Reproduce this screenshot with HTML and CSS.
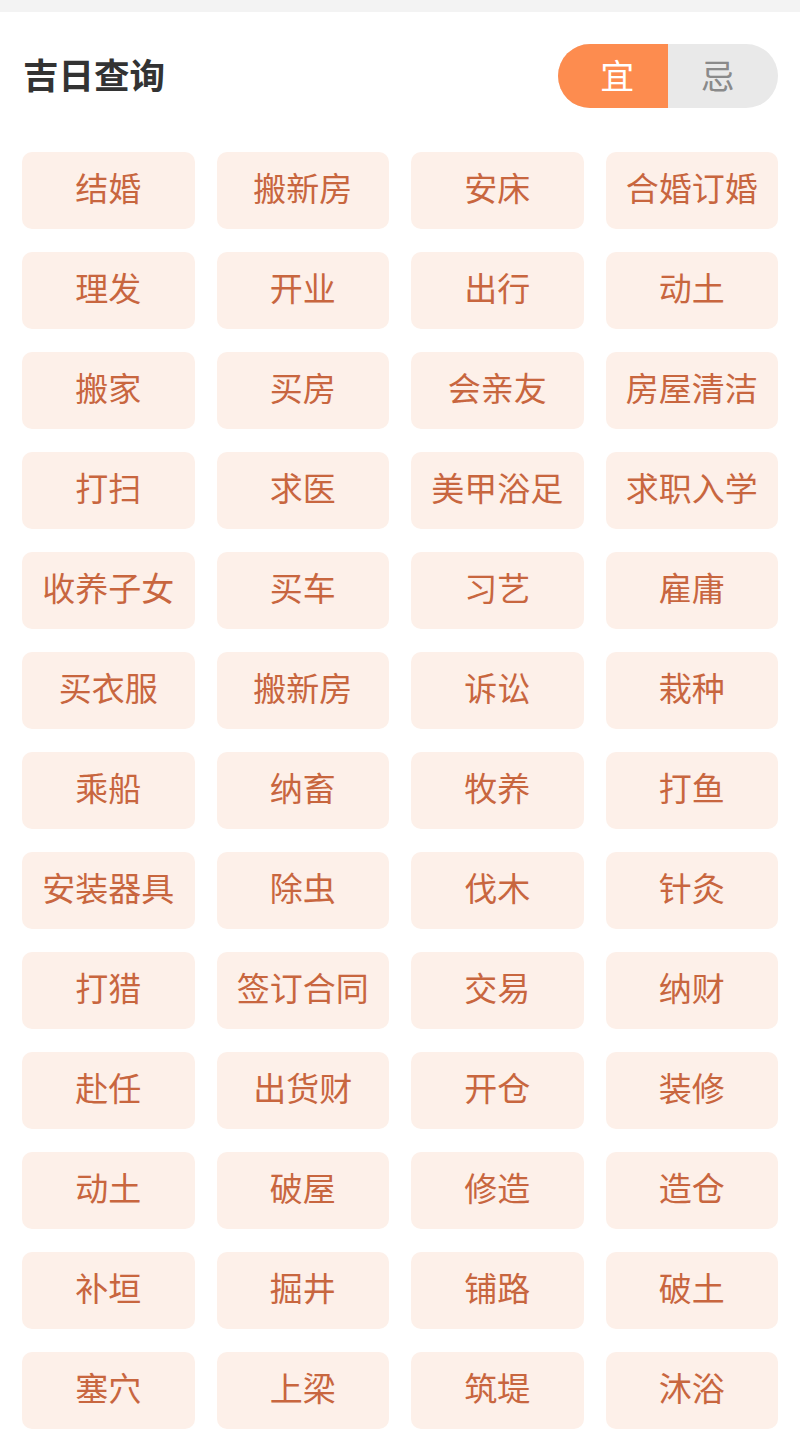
FILE: index.html
```html
<!DOCTYPE html>
<html lang="zh-CN">
<head>
    <meta charset="UTF-8">
    <meta name="viewport" content="width=device-width, initial-scale=1.0">
    <title>吉日查询</title>
    <link rel="stylesheet" href="styles.css">
</head>
<body>

<div class="top-strip"></div>

<div class="page">
    <!-- Header -->
    <div class="header">
        <h1 class="title">吉日查询</h1>
        <div class="toggle">
            <span class="toggle-item active">宜</span>
            <span class="toggle-item">忌</span>
        </div>
    </div>

    <!-- Tags -->
    <div class="tag-grid">
        <div class="tag">结婚</div>
        <div class="tag">搬新房</div>
        <div class="tag">安床</div>
        <div class="tag">合婚订婚</div>
        <div class="tag">理发</div>
        <div class="tag">开业</div>
        <div class="tag">出行</div>
        <div class="tag">动土</div>
        <div class="tag">搬家</div>
        <div class="tag">买房</div>
        <div class="tag">会亲友</div>
        <div class="tag">房屋清洁</div>
        <div class="tag">打扫</div>
        <div class="tag">求医</div>
        <div class="tag">美甲浴足</div>
        <div class="tag">求职入学</div>
        <div class="tag">收养子女</div>
        <div class="tag">买车</div>
        <div class="tag">习艺</div>
        <div class="tag">雇庸</div>
        <div class="tag">买衣服</div>
        <div class="tag">搬新房</div>
        <div class="tag">诉讼</div>
        <div class="tag">栽种</div>
        <div class="tag">乘船</div>
        <div class="tag">纳畜</div>
        <div class="tag">牧养</div>
        <div class="tag">打鱼</div>
        <div class="tag">安装器具</div>
        <div class="tag">除虫</div>
        <div class="tag">伐木</div>
        <div class="tag">针灸</div>
        <div class="tag">打猎</div>
        <div class="tag">签订合同</div>
        <div class="tag">交易</div>
        <div class="tag">纳财</div>
        <div class="tag">赴任</div>
        <div class="tag">出货财</div>
        <div class="tag">开仓</div>
        <div class="tag">装修</div>
        <div class="tag">动土</div>
        <div class="tag">破屋</div>
        <div class="tag">修造</div>
        <div class="tag">造仓</div>
        <div class="tag">补垣</div>
        <div class="tag">掘井</div>
        <div class="tag">铺路</div>
        <div class="tag">破土</div>
        <div class="tag">塞穴</div>
        <div class="tag">上梁</div>
        <div class="tag">筑堤</div>
        <div class="tag">沐浴</div>
    </div>
</div>

</body>
</html>
```

FILE: styles.css
```css
body {
    font-family: "Noto Sans CJK SC", "Noto Sans", sans-serif;
    background-color: #ffffff;
    margin: 0;
    padding: 0;
    overflow: hidden;
}
.top-strip {
    height: 12px;
    background-color: #f3f3f3;
}
.page {
    padding: 0 22px;
}
.header {
    display: flex;
    justify-content: space-between;
    align-items: center;
    height: 128px;
    padding-left: 1px;
}
.title {
    margin: 0 0 6px 0;
    font-size: 35.5px;
    font-weight: bold;
    color: #333333;
}
.toggle {
    display: flex;
    width: 220px;
    height: 64px;
    border-radius: 32px;
    overflow: hidden;
    background-color: #e9e9e9;
}
.toggle-item {
    flex: 1;
    display: flex;
    justify-content: center;
    align-items: center;
    padding-bottom: 4px;
    font-size: 34px;
    color: #8a8a8a;
}
.toggle-item.active {
    padding-left: 9px;
    background-color: #fd8c4f;
    color: #ffffff;
}
.toggle-item:last-child {
    padding-right: 10px;
}
/* Tag grid */
.tag-grid {
    display: grid;
    grid-template-columns: repeat(4, 1fr);
    column-gap: 22px;
    row-gap: 23px;
    margin-top: 12px;
}
.tag {
    height: 77px;
    box-sizing: border-box;
    padding-bottom: 8px;
    display: flex;
    justify-content: center;
    align-items: center;
    background-color: #fdf0e9;
    border-radius: 10px;
    font-size: 33px;
    color: #c8663f;
}
```
